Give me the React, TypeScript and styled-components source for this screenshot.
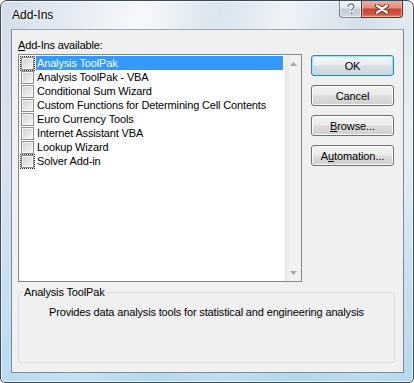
import React from "react";
import styled, { createGlobalStyle } from "styled-components";

const GlobalStyle = createGlobalStyle`
  html, body {
    margin: 0;
    padding: 0;
    background: #ffffff;
  }
  * {
    box-sizing: border-box;
  }
`;

const Window = styled.div`
  width: 414px;
  height: 383px;
  display: flex;
  flex-direction: column;
  padding: 0 9px 9px 10px;
  border: 1px solid #3b4a5a;
  border-radius: 7px 7px 5px 5px;
  background:
    linear-gradient(to bottom, rgba(255, 255, 255, 0) 40%, rgba(150, 205, 240, 0.55) 100%),
    linear-gradient(
      100deg,
      #d2dde7 0%,
      #e7eef4 18%,
      #f6f9fb 30%,
      #d9e4ed 46%,
      #eef3f7 60%,
      #d4e0ea 76%,
      #e8eff5 90%,
      #d9e4ed 100%
    );
  box-shadow: inset 0 0 0 1px rgba(255, 255, 255, 0.7);
  font-family: "Liberation Sans", Arial, sans-serif;
  font-size: 11px;
  color: #000;
  overflow: hidden;
`;

const TitleBar = styled.div`
  height: 28px;
  display: flex;
  align-items: flex-start;
  flex-shrink: 0;
`;

const Title = styled.div`
  margin-top: 6px;
  padding-left: 1px;
  font-size: 12px;
  line-height: 16px;
  color: #000;
  text-shadow: 0 0 6px rgba(255, 255, 255, 0.95), 0 0 2px #fff;
`;

const CaptionButtons = styled.div`
  margin-left: auto;
  margin-right: 1px;
  margin-top: -1px;
  display: flex;
`;

const HelpButton = styled.div`
  width: 22px;
  height: 18px;
  display: flex;
  align-items: center;
  justify-content: center;
  border: 1px solid rgba(60, 72, 90, 0.65);
  border-right: none;
  border-top: none;
  border-radius: 0 0 0 4px;
  background: linear-gradient(
    to bottom,
    rgba(255, 255, 255, 0.85) 0%,
    rgba(226, 232, 238, 0.8) 45%,
    rgba(190, 200, 211, 0.85) 55%,
    rgba(205, 214, 224, 0.85) 100%
  );
  box-shadow: inset 0 0 0 1px rgba(255, 255, 255, 0.6);
`;

const CloseButton = styled.div`
  width: 42px;
  height: 18px;
  display: flex;
  align-items: center;
  justify-content: center;
  border: 1px solid #6e2c25;
  border-top: none;
  border-radius: 0 0 4px 0;
  background: linear-gradient(
    to bottom,
    #eab2a6 0%,
    #df8f80 45%,
    #c74431 55%,
    #cf5a43 85%,
    #e08a6f 100%
  );
  box-shadow: inset 0 0 0 1px rgba(255, 210, 200, 0.55);
`;

const Client = styled.div`
  flex: 1;
  display: flex;
  flex-direction: column;
  padding: 8px 8px 9px 6px;
  background: #f0f0f0;
  border: 1px solid #7d8a97;
  border-top-color: #9aa7b4;
`;

const Label = styled.div`
  line-height: 14px;
  margin-bottom: 2px;
  letter-spacing: -0.15px;
`;

const Key = styled.span`
  text-decoration: underline;
`;

const MainRow = styled.div`
  display: flex;
  gap: 9px;
`;

const ListBox = styled.div`
  width: 284px;
  height: 228px;
  display: flex;
  border: 1px solid #828790;
  background: #ffffff;
`;

const Items = styled.div`
  flex: 1;
  padding-top: 1px;
  display: flex;
  flex-direction: column;
`;

const Item = styled.div`
  height: 14px;
  display: flex;
  align-items: center;
  padding-left: 2px;
  padding-right: 1px;
`;

const CheckBox = styled.span<{ $focused?: boolean }>`
  width: 13px;
  height: 13px;
  flex-shrink: 0;
  border: 1px solid #8e8f8f;
  background: linear-gradient(135deg, #cdd0d4 0%, #e4e5e7 55%, #f7f7f7 100%);
  box-shadow: inset 0 0 0 1px #f6f6f6;
  outline: ${(p) => (p.$focused ? "1px dotted #222" : "none")};
  outline-offset: 0;
`;

const ItemText = styled.span<{ $selected?: boolean }>`
  flex: 1;
  height: 14px;
  margin-left: 2px;
  padding-left: 1px;
  line-height: 14px;
  white-space: nowrap;
  letter-spacing: -0.15px;
  background: ${(p) => (p.$selected ? "#3399ff" : "transparent")};
  color: ${(p) => (p.$selected ? "#ffffff" : "#000000")};
`;

const ScrollBar = styled.div`
  width: 17px;
  display: flex;
  flex-direction: column;
  justify-content: space-between;
  background: linear-gradient(to right, #e6e6e6 0%, #f3f3f3 40%, #f1f1f1 100%);
  border-left: 1px solid #f7f7f7;
`;

const ScrollArrow = styled.div`
  height: 17px;
  display: flex;
  align-items: center;
  justify-content: center;
`;

const Buttons = styled.div`
  width: 83px;
  padding-top: 1px;
  display: flex;
  flex-direction: column;
  gap: 9px;
`;

const Button = styled.div<{ $default?: boolean }>`
  height: 21px;
  display: flex;
  align-items: center;
  justify-content: center;
  border: 1px solid ${(p) => (p.$default ? "#3c7fb1" : "#707070")};
  border-radius: 3px;
  background: ${(p) =>
    p.$default
      ? "linear-gradient(to bottom, #f3f7fa 0%, #e6edf2 48%, #d7dfe6 52%, #cdd6de 100%)"
      : "linear-gradient(to bottom, #f2f2f2 0%, #ebebeb 48%, #dddddd 52%, #cfcfcf 100%)"};
  box-shadow: ${(p) =>
    p.$default
      ? "inset 0 0 0 1px #9ee3fb"
      : "inset 0 0 0 1px rgba(255, 255, 255, 0.85)"};
  font-size: 11px;
  letter-spacing: -0.1px;
`;

const GroupBox = styled.fieldset`
  flex: 1;
  margin: 3px 0 0 0;
  padding: 0 3px;
  border: 1px solid #d5dfe5;
  border-radius: 3px;
  min-width: 0;
`;

const Legend = styled.legend`
  padding: 0 2px;
  line-height: 14px;
  letter-spacing: -0.15px;
`;

const Description = styled.div`
  margin-top: 6px;
  line-height: 14px;
  text-align: center;
  letter-spacing: -0.15px;
`;

const addIns = [
  "Analysis ToolPak",
  "Analysis ToolPak - VBA",
  "Conditional Sum Wizard",
  "Custom Functions for Determining Cell Contents",
  "Euro Currency Tools",
  "Internet Assistant VBA",
  "Lookup Wizard",
  "Solver Add-in",
];

function HelpGlyph() {
  return (
    <svg width="10" height="12" viewBox="0 0 10 12">
      <path
        d="M2 3.5 C2 1.5 3.5 1 5 1 C6.8 1 8 2 8 3.4 C8 5 5.6 5.4 5.6 7.4"
        fill="none"
        stroke="#ffffff"
        strokeWidth="3"
        strokeLinecap="round"
      />
      <path
        d="M2 3.5 C2 1.5 3.5 1 5 1 C6.8 1 8 2 8 3.4 C8 5 5.6 5.4 5.6 7.4"
        fill="none"
        stroke="#6f7a86"
        strokeWidth="1.4"
        strokeLinecap="round"
      />
      <circle cx="5.6" cy="10.2" r="1.3" fill="#6f7a86" stroke="#fff" strokeWidth="0.6" />
    </svg>
  );
}

function CloseGlyph() {
  return (
    <svg width="14" height="10" viewBox="0 0 14 10">
      <path d="M2 1.5 L12 8.5 M12 1.5 L2 8.5" stroke="#6b2820" strokeWidth="4.2" strokeLinecap="round" />
      <path d="M2 1.5 L12 8.5 M12 1.5 L2 8.5" stroke="#ffffff" strokeWidth="2.4" strokeLinecap="round" />
    </svg>
  );
}

function Arrow({ up }: { up?: boolean }) {
  return (
    <svg width="7" height="4" viewBox="0 0 7 4">
      <path d={up ? "M0 4 L3.5 0 L7 4 Z" : "M0 0 L7 0 L3.5 4 Z"} fill="#a7a7a7" />
    </svg>
  );
}

export default function App() {
  return (
    <>
      <GlobalStyle />
      <Window>
        <TitleBar>
          <Title>Add-Ins</Title>
          <CaptionButtons>
            <HelpButton>
              <HelpGlyph />
            </HelpButton>
            <CloseButton>
              <CloseGlyph />
            </CloseButton>
          </CaptionButtons>
        </TitleBar>
        <Client>
          <Label>
            <Key>A</Key>dd-Ins available:
          </Label>
          <MainRow>
            <ListBox>
              <Items>
                {addIns.map((name, i) => (
                  <Item key={name}>
                    <CheckBox $focused={i === 0 || i === addIns.length - 1} />
                    <ItemText $selected={i === 0}>{name}</ItemText>
                  </Item>
                ))}
              </Items>
              <ScrollBar>
                <ScrollArrow>
                  <Arrow up />
                </ScrollArrow>
                <ScrollArrow>
                  <Arrow />
                </ScrollArrow>
              </ScrollBar>
            </ListBox>
            <Buttons>
              <Button $default>OK</Button>
              <Button>Cancel</Button>
              <Button>
                <Key>B</Key>rowse...
              </Button>
              <Button>
                A<Key>u</Key>tomation...
              </Button>
            </Buttons>
          </MainRow>
          <GroupBox>
            <Legend>Analysis ToolPak</Legend>
            <Description>
              Provides data analysis tools for statistical and engineering analysis
            </Description>
          </GroupBox>
        </Client>
      </Window>
    </>
  );
}
